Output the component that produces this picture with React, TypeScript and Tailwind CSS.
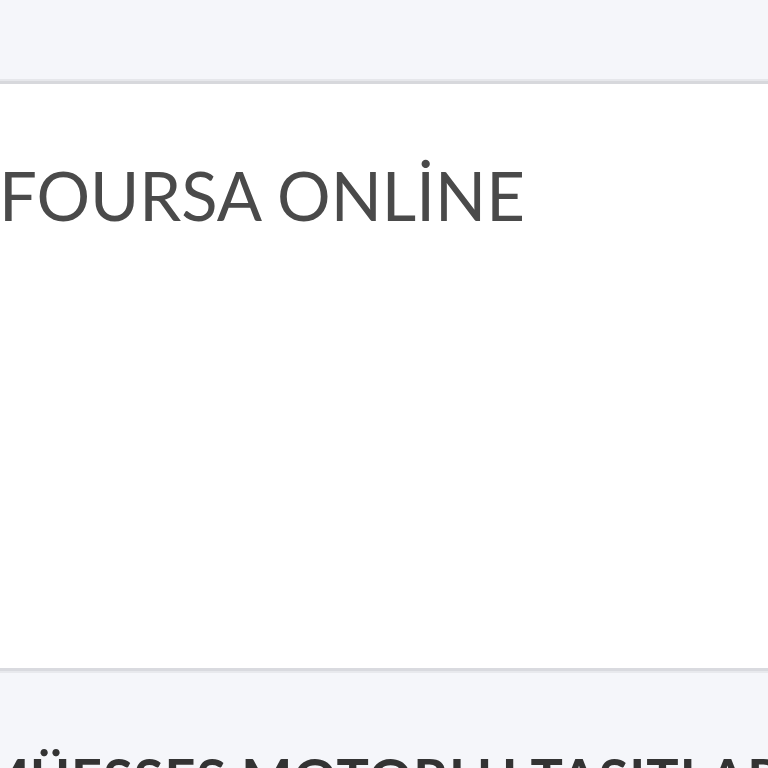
export default function App() {
  return (
    <div className="w-[768px] h-[768px] overflow-hidden bg-[#f5f6fa] flex flex-col font-['Lato','Open_Sans',sans-serif]">
      <div className="h-[79px] shrink-0 bg-[#f5f6fa]" />
      <div className="h-[2px] shrink-0 bg-[#e6e7eb]" />
      <div className="h-[3px] shrink-0 bg-[#d7d8dc]" />
      <div className="h-[584px] shrink-0 bg-white pt-[78px]">
        <h1 className="text-[67px] leading-none font-normal text-[#4a4a4a] whitespace-nowrap -ml-[1px]">
          FOURSA ONLİNE
        </h1>
      </div>
      <div className="h-[3px] shrink-0 bg-[#d9dadf]" />
      <div className="h-[2px] shrink-0 bg-[#e8e9ed]" />
      <div className="flex-1 bg-[#f5f6fa] pt-[78px] overflow-hidden">
        <p className="text-[54px] leading-none font-bold text-[#333333] whitespace-nowrap -ml-[22px] tracking-[1px]">
          MÜESSES MOTORLU TAŞITLAR
        </p>
      </div>
    </div>
  );
}
